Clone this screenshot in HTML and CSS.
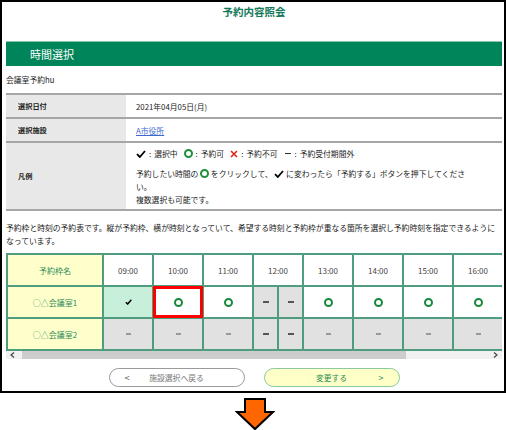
FILE: index.html
```html
<!DOCTYPE html>
<html lang="ja">
  <head>
    <meta charset="UTF-8" />
    <meta name="viewport" content="width=device-width, initial-scale=1.0" />
    <title>予約内容照会</title>
    <link rel="stylesheet" href="styles.css">
  </head>
  <body>
    <div class="frame">
      <h1 class="title">予約内容照会</h1>

      <div class="section-head">時間選択</div>

      <div class="room-name">会議室予約hu</div>

      <div class="info">
        <div class="info-row row-date">
          <div class="info-label">選択日付</div>
          <div class="info-value">2021年04月05日(月)</div>
        </div>
        <div class="info-row row-place">
          <div class="info-label">選択施設</div>
          <div class="info-value"><a href="#" class="link">A市役所</a></div>
        </div>
        <div class="info-row row-legend">
          <div class="info-label">凡例</div>
          <div class="info-value legend">
            <div class="legend-line">
              <span class="legend-item">
                <svg class="ico-check" width="10" height="8" viewBox="0 0 10 8"><path d="M1 4.2 L3.8 7 L9 1" stroke="#000" stroke-width="1.8" fill="none"/></svg>
                <span class="colon">:</span>選択中
              </span>
              <span class="legend-item">
                <span class="ring"></span>
                <span class="colon">:</span>予約可
              </span>
              <span class="legend-item">
                <svg class="ico-cross" width="8" height="8" viewBox="0 0 8 8"><path d="M1 1 L7 7 M7 1 L1 7" stroke="#e2241a" stroke-width="1.6" fill="none"/></svg>
                <span class="colon">:</span>予約不可
              </span>
              <span class="legend-item">
                <span class="legend-dash"></span>
                <span class="colon">:</span>予約受付期間外
              </span>
            </div>
            <div class="legend-note">
              予約したい時間の <span class="ring"></span> をクリックして、
              <svg class="ico-check" width="10" height="8" viewBox="0 0 10 8"><path d="M1 4.2 L3.8 7 L9 1" stroke="#000" stroke-width="1.8" fill="none"/></svg>
              に変わったら「予約する」ボタンを押下してくださ<br>い。<br>複数選択も可能です。
            </div>
          </div>
        </div>
      </div>

      <p class="desc">予約枠と時刻の予約表です。縦が予約枠、横が時刻となっていて、希望する時刻と予約枠が重なる箇所を選択し予約時刻を指定できるように<br>なっています。</p>

      <div class="slots-wrap">
        <div class="slots">
          <div class="cell name">予約枠名</div>
          <div class="cell time">09:00</div>
          <div class="cell time">10:00</div>
          <div class="cell time">11:00</div>
          <div class="cell time">12:00</div>
          <div class="cell time">13:00</div>
          <div class="cell time">14:00</div>
          <div class="cell time">15:00</div>
          <div class="cell time">16:00</div>

          <div class="cell name">○△会議室1</div>
          <div class="cell chosen">
            <svg width="7" height="6" viewBox="0 0 7 6"><path d="M0.8 3.2 L2.7 5 L6.3 0.8" stroke="#000" stroke-width="1.5" fill="none"/></svg>
          </div>
          <div class="cell open selected"><span class="ring big"></span></div>
          <div class="cell open"><span class="ring big"></span></div>
          <div class="cell split">
            <div class="half"><span class="dash"></span></div>
            <div class="half"><span class="dash"></span></div>
          </div>
          <div class="cell open"><span class="ring big"></span></div>
          <div class="cell open"><span class="ring big"></span></div>
          <div class="cell open"><span class="ring big"></span></div>
          <div class="cell open"><span class="ring big"></span></div>

          <div class="cell name">○△会議室2</div>
          <div class="cell closed"><span class="dash light"></span></div>
          <div class="cell closed"><span class="dash light"></span></div>
          <div class="cell closed"><span class="dash light"></span></div>
          <div class="cell split">
            <div class="half"><span class="dash"></span></div>
            <div class="half"><span class="dash"></span></div>
          </div>
          <div class="cell closed"><span class="dash light"></span></div>
          <div class="cell closed"><span class="dash light"></span></div>
          <div class="cell closed"><span class="dash light"></span></div>
          <div class="cell closed"><span class="dash light"></span></div>
        </div>
      </div>

      <div class="scrollbar">
        <svg class="sb-arrow" width="14" height="8" viewBox="0 0 14 8"><path d="M8 1.5 L5 4 L8 6.5" stroke="#444" stroke-width="1.2" fill="none"/></svg>
        <div class="sb-thumb"></div>
        <div class="sb-rest"></div>
        <svg class="sb-arrow" width="14" height="8" viewBox="0 0 14 8"><path d="M6 1.5 L9 4 L6 6.5" stroke="#444" stroke-width="1.2" fill="none"/></svg>
      </div>

      <div class="actions">
        <button class="btn btn-back"><span class="chev">&lt;</span><span class="btn-text">施設選択へ戻る</span><span class="chev"></span></button>
        <button class="btn btn-next"><span class="chev"></span><span class="btn-text">変更する</span><span class="chev">&gt;</span></button>
      </div>
    </div>

    <div class="arrow">
      <svg width="40" height="33" viewBox="0 0 40 33"><polygon points="10,1 30,1 30,14 38,14 20,31 2,14 10,14" fill="#ff6600" stroke="#000" stroke-width="2" stroke-linejoin="miter"/></svg>
    </div>
  </body>
</html>
```

FILE: styles.css
```css
* {
  box-sizing: border-box;
}

body {
  margin: 0;
  font-family: "Noto Sans CJK JP", "Noto Sans", sans-serif;
  color: #333;
  background: #fff;
}

.frame {
  width: 506px;
  border: 2px solid #000;
  padding: 0 2px 4px 4px;
}

.title {
  margin: 0 0 19px 0;
  height: 20px;
  line-height: 20px;
  text-align: center;
  font-size: 10.5px;
  font-weight: bold;
  color: #12795a;
}

.section-head {
  height: 25px;
  line-height: 24px;
  background: #00845a;
  border-top: 1px solid #8fc5ad;
  color: #fff;
  font-size: 11px;
  padding-left: 24px;
}

.room-name {
  margin: 8px 0 7px 0;
  line-height: 12px;
  font-size: 7.8px;
  color: #222;
}

/* info table */
.info {
  border-bottom: 2px solid #a6a6a6;
}

.info-row {
  display: grid;
  grid-template-columns: 120px 1fr;
  border-top: 2px solid #a6a6a6;
}

.row-date,
.row-place {
  height: 24px;
}

.row-legend {
  height: 68px;
}

.info-label {
  background: #e8e8e8;
  font-size: 7.2px;
  font-weight: bold;
  color: #222;
  padding-left: 12px;
  display: flex;
  align-items: center;
}

.info-value {
  font-size: 7.8px;
  color: #222;
  padding-left: 10px;
  display: flex;
  align-items: center;
}

.link {
  color: #3a6ad0;
  text-decoration: underline;
}

.legend {
  display: block;
  padding-top: 4px;
}

.legend-line {
  height: 13px;
  display: flex;
  align-items: center;
}

.legend-item {
  display: inline-flex;
  align-items: center;
  margin-right: 6px;
}

.colon {
  margin: 0 3px 0 3px;
}

.legend-note {
  margin-top: 6.5px;
  line-height: 13px;
}

.ring {
  display: inline-block;
  width: 9px;
  height: 9px;
  border: 2px solid #1f8f3a;
  border-radius: 50%;
  vertical-align: -1px;
}

.ico-check {
  vertical-align: -1px;
}

.legend-dash {
  display: inline-block;
  width: 6px;
  height: 1.5px;
  background: #333;
  margin-left: 2px;
}

.desc {
  margin: 10px 0 6px 0;
  font-size: 7.8px;
  line-height: 13px;
  color: #222;
}

/* slot grid */
.slots-wrap {
  width: 496px;
  overflow: hidden;
}

.slots {
  display: grid;
  grid-template-columns: 94px repeat(8, 48px);
  grid-auto-rows: 30px;
  gap: 2px;
  padding: 2px;
  background: #4f9d7e;
  width: max-content;
}

.cell {
  background: #fff;
  display: flex;
  align-items: center;
  justify-content: center;
  font-size: 8px;
}

.cell.name {
  background: #ffffcc;
  color: #2c8a5a;
}

.cell.time {
  color: #444;
}

.cell.chosen {
  background: #c8efd9;
}

.cell.closed {
  background: #e1e1e1;
}

.cell.selected {
  outline: 3px solid #ff0000;
  outline-offset: -2px;
}

.ring.big {
  width: 9px;
  height: 9px;
  border-color: #17893a;
}

.cell.split {
  display: grid;
  grid-template-columns: 1fr 1fr;
  align-items: stretch;
  gap: 2px;
  background: #4f9d7e;
}

.half {
  background: #e1e1e1;
  display: flex;
  align-items: center;
  justify-content: center;
}

.dash {
  display: inline-block;
  width: 6px;
  height: 2px;
  background: #555;
}

.dash.light {
  width: 5px;
  height: 1.5px;
  background: #999;
}

/* fake scrollbar */
.scrollbar {
  display: flex;
  align-items: center;
  height: 8px;
  width: 496px;
  background: #f1f1f1;
}

.sb-thumb {
  width: 384px;
  height: 8px;
  margin-left: 2px;
  background: #cdcdcd;
}

.sb-rest {
  flex: 1;
}

/* buttons */
.actions {
  display: flex;
  justify-content: center;
  gap: 19px;
  margin-top: 9px;
}

.btn {
  width: 136px;
  height: 19px;
  border-radius: 10px;
  border: 1px solid #9a9a9a;
  background: #fff;
  display: grid;
  grid-template-columns: 20px 1fr 20px;
  align-items: center;
  padding: 0;
  font-family: inherit;
  font-size: 7.8px;
  cursor: pointer;
}

.btn-back {
  color: #777;
}

.btn-back .chev {
  color: #555;
  font-size: 9px;
  text-align: right;
}

.btn-next {
  background: #ffffc8;
  border-color: #8cc9a0;
  color: #2c8a5a;
}

.btn-next .chev {
  color: #2c8a5a;
  font-size: 9px;
  text-align: left;
}

.btn-text {
  text-align: center;
}

.arrow {
  display: flex;
  justify-content: center;
  margin-top: 5px;
  padding-left: 4px;
}
```
